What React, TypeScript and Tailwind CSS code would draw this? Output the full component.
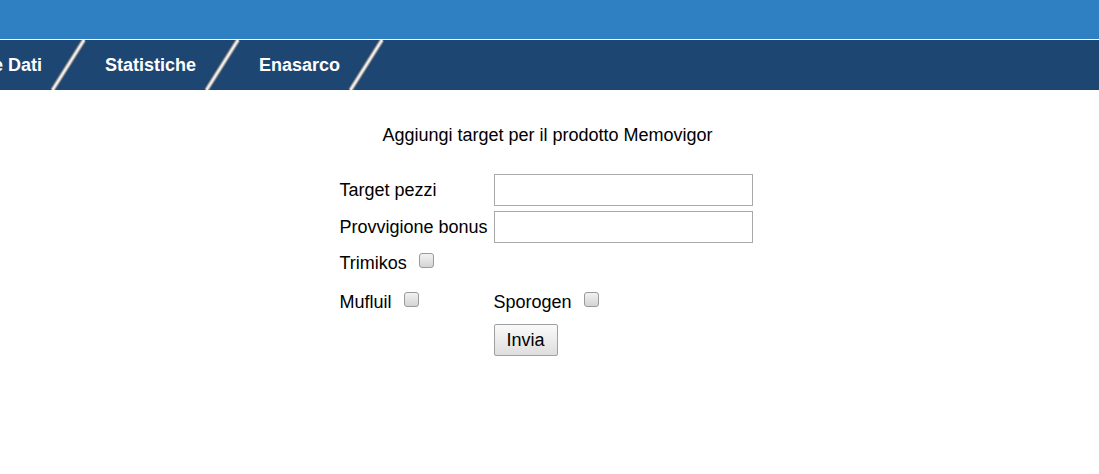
import React from 'react';

const navItems = ['e Dati', 'Statistiche', 'Enasarco'];

const Separator = () => (
  <svg width="40" height="50" viewBox="0 0 40 50" className="shrink-0 ml-[5px] mr-[18px]">
    <line x1="37" y1="0" x2="5.5" y2="50" stroke="#7d7d7d" strokeWidth="5" />
    <line x1="37" y1="0" x2="5.5" y2="50" stroke="#c8c8c8" strokeWidth="3" />
    <line x1="37" y1="0" x2="5.5" y2="50" stroke="#f4f4f4" strokeWidth="1.4" />
  </svg>
);

const Checkbox = ({ className = '' }: { className?: string }) => (
  <input
    type="checkbox"
    className={`appearance-none w-[15px] h-[15px] rounded-[3px] border border-[#9a9a9a] bg-gradient-to-b from-[#f2f2f2] to-[#d4d4d4] ${className}`}
  />
);

const App = () => (
  <div className="min-h-[474px] bg-white font-['Liberation_Sans',Arial,sans-serif] text-black">
    <div className="h-[39px] bg-[#2e80c3]" />
    <div className="h-px bg-white" />
    <nav className="h-[50px] bg-[#1e4672] flex items-center overflow-hidden">
      {navItems.map((label, i) => (
        <React.Fragment key={label}>
          <span className={`text-white font-bold text-[18px] whitespace-nowrap ${i === 0 ? '-ml-[7px]' : ''}`}>
            {label}
          </span>
          <Separator />
        </React.Fragment>
      ))}
    </nav>

    <main className="flex flex-col items-center pt-[36px]">
      <h1 className="text-[18px] leading-[19px] font-normal ml-[-4px]">Aggiungi target per il prodotto Memovigor</h1>

      <form className="mt-[29px] w-[413px] ml-[-7px] text-[18px]">
        <div className="flex items-center h-[32px]">
          <label className="w-[154px]">Target pezzi</label>
          <input type="text" className="w-[259px] h-[32px] border border-[#a9a9a9] bg-white" />
        </div>
        <div className="flex items-center h-[32px] mt-[5px]">
          <label className="w-[154px]">Provvigione bonus</label>
          <input type="text" className="w-[259px] h-[32px] border border-[#a9a9a9] bg-white" />
        </div>
        <div className="flex items-center h-[40px]">
          <label>Trimikos</label>
          <Checkbox className="ml-[12px] mb-[6px]" />
        </div>
        <div className="flex items-center h-[38px]">
          <div className="w-[154px] flex items-center">
            <label>Mufluil</label>
            <Checkbox className="ml-[12px] mb-[6px]" />
          </div>
          <label>Sporogen</label>
          <Checkbox className="ml-[12px] mb-[6px]" />
        </div>
        <div className="pl-[154px] mt-[3px]">
          <button
            type="button"
            className="w-[64px] h-[32px] border border-[#a0a0a0] rounded-[2px] bg-gradient-to-b from-[#fafafa] to-[#dedede] text-[18px]"
          >
            Invia
          </button>
        </div>
      </form>
    </main>
  </div>
);

export default App;
